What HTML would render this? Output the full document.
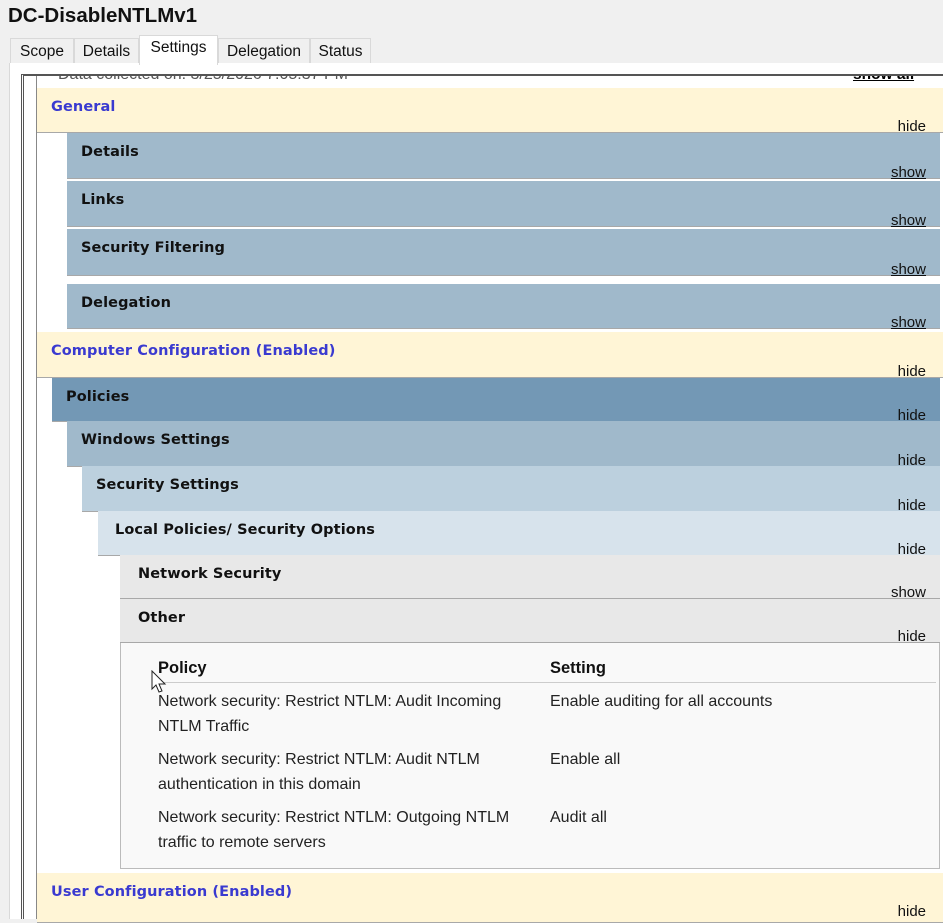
<!DOCTYPE html>
<html><head><style>
*{margin:0;padding:0;box-sizing:border-box}
body{width:943px;height:919px;overflow:hidden;background:#f0f0f0;font-family:"Liberation Sans",sans-serif;position:relative}
.a{position:absolute}
.title{left:8px;top:4px;font-weight:bold;font-size:20.5px;color:#111}
.tab{top:38px;height:26px;font-size:15.5px;color:#111;background:#f0f0f0;border:1px solid #d9d9d9;border-bottom:none;padding:4px 0 0;text-align:center}
.bar{position:absolute;right:3px;border-bottom:1px solid #a8a8a8}
.h{position:absolute;left:14px;top:11px;font-family:"DejaVu Sans",sans-serif;font-weight:bold;font-size:14.5px;color:#111;letter-spacing:0.1px}
.lk{position:absolute;right:14px;bottom:-3px;font-size:15px;color:#111}
.u{text-decoration:underline}
.y{background:#fff5d6;left:37px;right:0}
.y .h{color:#3a3ad0}
.y .lk{right:17px}
.b1{background:#a0b9cb}
.t{font-size:16px;color:#222;line-height:25px}
</style></head><body>
<div class="a title">DC-DisableNTLMv1</div>
<div class="a tab" style="left:10px;width:64px">Scope</div>
<div class="a tab" style="left:74px;width:65px">Details</div>
<div class="a tab" style="left:139px;width:79px;top:35px;height:30px;background:#fff;z-index:2;padding-top:3px">Settings</div>
<div class="a tab" style="left:218px;width:92px">Delegation</div>
<div class="a tab" style="left:310px;width:61px">Status</div>
<div class="a" style="left:9px;top:63px;width:934px;height:856px;background:#fff;border-left:1px solid #d9d9d9"></div>
<div class="a" style="left:58px;top:66px;font-size:16px;line-height:18px;color:#555;clip-path:inset(9px 0 0 0)">Data collected on: 3/25/2026 7:05:37 PM</div>
<div class="a u" style="left:853px;top:66px;font-size:15.5px;line-height:18px;font-weight:bold;clip-path:inset(9px 0 0 0)">show all</div>
<div class="a" style="left:21px;top:74px;width:922px;height:845px;border-left:3px double #555;border-top:2px solid #555"></div>
<div class="a" style="left:36px;top:76px;width:1px;height:843px;background:#888"></div>

<div class="bar y" style="top:88px;height:45px;right:0"><div class="h">General</div><div class="lk">hide</div></div>
<div class="bar b1" style="left:67px;top:133px;height:46px"><div class="h">Details</div><div class="lk u">show</div></div>
<div class="bar b1" style="left:67px;top:181px;height:46px"><div class="h">Links</div><div class="lk u">show</div></div>
<div class="bar b1" style="left:67px;top:229px;height:47px"><div class="h">Security Filtering</div><div class="lk u">show</div></div>
<div class="bar b1" style="left:67px;top:284px;height:45px"><div class="h">Delegation</div><div class="lk u">show</div></div>
<div class="bar y" style="top:332px;height:46px;right:0"><div class="h">Computer Configuration (Enabled)</div><div class="lk">hide</div></div>
<div class="bar" style="left:52px;top:378px;height:44px;background:#7398b5"><div class="h">Policies</div><div class="lk">hide</div></div>
<div class="bar b1" style="left:67px;top:421px;height:46px"><div class="h">Windows Settings</div><div class="lk">hide</div></div>
<div class="bar" style="left:82px;top:466px;height:46px;background:#bcd0de"><div class="h">Security Settings</div><div class="lk">hide</div></div>
<div class="bar" style="left:98px;top:511px;height:45px;background:#d7e3ec"><div class="h" style="left:17px">Local Policies/ Security Options</div><div class="lk">hide</div></div>
<div class="bar" style="left:120px;top:555px;height:44px;background:#e8e8e8"><div class="h" style="left:18px">Network Security</div><div class="lk">show</div></div>
<div class="bar" style="left:120px;top:599px;height:44px;background:#e8e8e8"><div class="h" style="left:18px">Other</div><div class="lk">hide</div></div>
<div class="a" style="left:120px;top:643px;width:820px;height:226px;background:#f9f9f9;border:1px solid #bbb;border-top:none"></div>
<div class="a" style="left:158px;top:659px;font-weight:bold;font-size:16.5px;color:#111">Policy</div>
<div class="a" style="left:550px;top:659px;font-weight:bold;font-size:16.5px;color:#111">Setting</div>
<div class="a" style="left:156px;top:682px;width:780px;height:1px;background:#ccc"></div>
<div class="a t" style="left:158px;top:689px;width:370px">Network security: Restrict NTLM: Audit Incoming NTLM Traffic</div>
<div class="a t" style="left:550px;top:689px">Enable auditing for all accounts</div>
<div class="a t" style="left:158px;top:747px;width:370px">Network security: Restrict NTLM: Audit NTLM authentication in this domain</div>
<div class="a t" style="left:550px;top:747px">Enable all</div>
<div class="a t" style="left:158px;top:805px;width:370px">Network security: Restrict NTLM: Outgoing NTLM traffic to remote servers</div>
<div class="a t" style="left:550px;top:805px">Audit all</div>
<svg class="a" style="left:151px;top:670px" width="20" height="26" viewBox="0 0 20 26"><path d="M1 1 L1 19 L5 15 L8 22 L11 21 L8 14 L14 14 Z" fill="#fff" stroke="#222" stroke-width="1"/></svg>
<div class="bar y" style="top:873px;height:50px;right:0"><div class="h">User Configuration (Enabled)</div><div class="lk" style="bottom:2px">hide</div></div>
</body></html>
